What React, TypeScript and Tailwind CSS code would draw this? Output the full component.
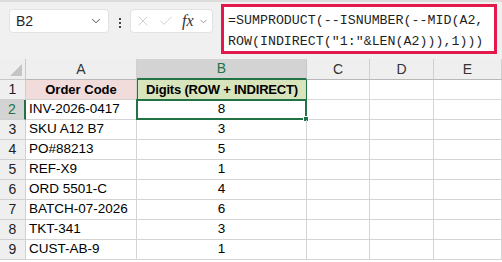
import { Check, ChevronDown, X } from "lucide-react";

const rows: [string, number][] = [
  ["INV-2026-0417", 8],
  ["SKU A12 B7", 3],
  ["PO#88213", 5],
  ["REF-X9", 1],
  ["ORD 5501-C", 4],
  ["BATCH-07-2026", 6],
  ["TKT-341", 3],
  ["CUST-AB-9", 1],
];

function Toolbar() {
  return (
    <div className="flex h-[59px] items-start bg-[#f0f0f0] border-t-2 border-[#dcdcdc]">
      {/* Name box */}
      <div className="ml-[9px] mt-[7px] flex h-[24px] w-[100px] items-center justify-between rounded-[4px] border border-[#e2e2e2] bg-white pl-[6px] pr-[5px]">
        <span className="text-[14px] text-[#1f1f1f]">B2</span>
        <ChevronDown size={14} strokeWidth={1.6} className="text-[#444]" />
      </div>

      {/* Splitter dots */}
      <div className="ml-[10px] mt-[16px] flex flex-col gap-[2px]">
        <div className="h-[2px] w-[2px] bg-[#444]" />
        <div className="h-[2px] w-[2px] bg-[#444]" />
        <div className="h-[2px] w-[2px] bg-[#444]" />
      </div>

      {/* Cancel / enter / fx */}
      <div className="ml-[9px] mt-[7px] flex h-[24px] w-[83px] items-center rounded-[4px] border border-[#e2e2e2] bg-white pl-[4px]">
        <X size={16} strokeWidth={1.2} className="text-[#c4c4c4]" />
        <Check size={16} strokeWidth={1.2} className="ml-[7px] text-[#c4c4c4]" />
        <span className="ml-[8px] font-['Liberation_Serif',serif] text-[16px] italic leading-none text-[#333]">
          fx
        </span>
        <ChevronDown size={11} strokeWidth={1.6} className="ml-[4px] text-[#777]" />
      </div>

      {/* Formula bar */}
      <div className="ml-[8px] mt-[2px] h-[50px] w-[276px] border-[3px] border-[#e3194c] bg-white pl-[4px] pt-[3px] font-['Liberation_Mono',monospace] text-[13.3px] leading-[21px] text-[#1f1f1f]">
        <div>=SUMPRODUCT(--ISNUMBER(--MID(A2,</div>
        <div>ROW(INDIRECT("1:"&amp;LEN(A2))),1)))</div>
      </div>
    </div>
  );
}

export default function App() {
  const cols = ["A", "B", "C", "D", "E"];
  return (
    <div className="h-[262px] w-[502px] overflow-hidden bg-white font-['Liberation_Sans',Arial,sans-serif]">
      <Toolbar />

      <div className="grid grid-cols-[26px_111px_170px_63px_64px_68px]">
        {/* Column headers */}
        <div className="relative h-[21px] border-b border-r border-[#c8c8c8] bg-[#efefef]">
          <svg className="absolute left-0 top-0" width="26" height="21">
            <polygon points="22,5 22,17 10,17" fill="#c4c4c4" />
          </svg>
        </div>
        {cols.map((c) =>
          c === "B" ? (
            <div
              key={c}
              className="flex h-[21px] items-center justify-center border-b-2 border-r border-b-[#217346] border-r-[#c8c8c8] bg-[#d3d3d3] text-[14px] text-[#217346]"
            >
              {c}
            </div>
          ) : (
            <div
              key={c}
              className="flex h-[21px] items-center justify-center border-b border-r border-[#b8b8b8] border-r-[#d0d0d0] bg-[#efefef] text-[14px] text-[#333]"
            >
              {c}
            </div>
          )
        )}

        {/* Row 1 */}
        <div className="flex h-[20px] items-center justify-center border-b border-r border-[#d0d0d0] bg-[#efefef] text-[14px] text-[#222]">
          1
        </div>
        <div className="flex h-[20px] items-center justify-center border-b border-r border-[#d0d0d0] bg-[#f2dcdb] text-[13px] font-bold text-black">
          Order Code
        </div>
        <div className="flex h-[20px] items-center justify-center border-x border-b border-[#217346] bg-[#d8e4bc] text-[13px] font-bold tracking-[-0.2px] text-black">
          Digits (ROW + INDIRECT)
        </div>
        <div className="h-[20px] border-b border-r border-[#dadada]" />
        <div className="h-[20px] border-b border-r border-[#dadada]" />
        <div className="h-[20px] border-b border-r border-[#dadada]" />

        {rows.map(([code, n], i) => {
          const r = i + 2;
          const sel = r === 2;
          return (
            <div key={r} className="contents">
              <div
                className={
                  sel
                    ? "flex h-[20px] items-center justify-center border-b border-r-2 border-b-[#d0d0d0] border-r-[#217346] bg-[#d3d3d3] text-[14px] text-[#217346]"
                    : "flex h-[20px] items-center justify-center border-b border-r border-[#d0d0d0] bg-[#efefef] text-[14px] text-[#222]"
                }
              >
                {r}
              </div>
              <div className="flex h-[20px] items-center border-b border-r border-[#d4d4d4] pl-[3px] text-[13.5px] text-black">
                {code}
              </div>
              <div className="relative flex h-[20px] items-center justify-center border-b border-r border-[#d4d4d4] text-[13.5px] text-black">
                {n}
                {sel && (
                  <>
                    <div className="absolute -bottom-px -left-px -right-px -top-px border-2 border-[#217346]" />
                    <div className="absolute -bottom-[3px] -right-[3px] h-[6px] w-[6px] border border-white bg-[#217346]" />
                  </>
                )}
              </div>
              <div className="h-[20px] border-b border-r border-[#d4d4d4]" />
              <div className="h-[20px] border-b border-r border-[#d4d4d4]" />
              <div className="h-[20px] border-b border-r border-[#d4d4d4]" />
            </div>
          );
        })}
      </div>
    </div>
  );
}
